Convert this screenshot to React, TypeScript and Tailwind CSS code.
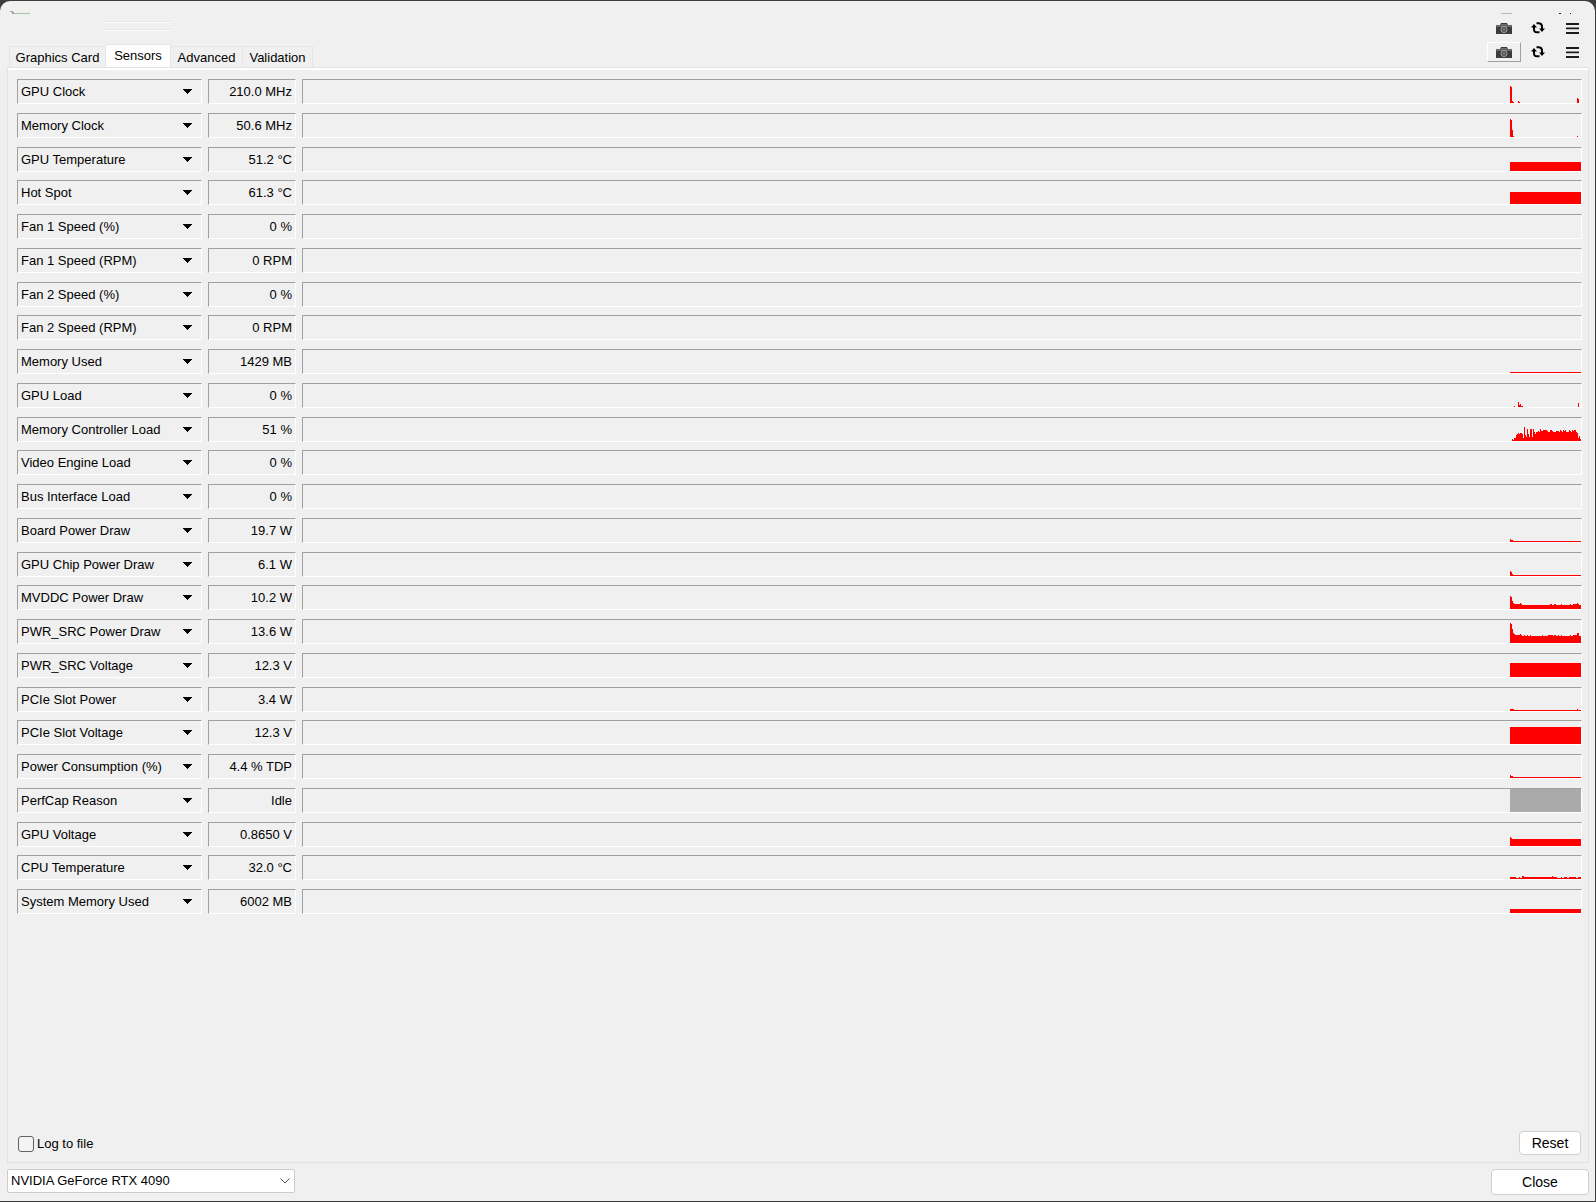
import React from 'react';

// Runs of [height, width] in pixels, drawn left to right along the bottom of the graph
type Run = [number, number];

interface Sensor {
  name: string;
  value: string;
  runs?: Run[];
  idle?: boolean;
}

const sensors: Sensor[] = [
  { name: 'GPU Clock', value: '210.0 MHz', runs: [[17, 1], [16, 1], [2, 1], [1, 1], [0, 4], [2, 1], [1, 1], [0, 57], [5, 1], [4, 1], [0, 2]] },
  { name: 'Memory Clock', value: '50.6 MHz', runs: [[18, 1], [17, 1], [7, 1], [1, 1], [0, 63], [1, 1], [0, 3]] },
  { name: 'GPU Temperature', value: '51.2 °C', runs: [[9, 71]] },
  { name: 'Hot Spot', value: '61.3 °C', runs: [[12, 71]] },
  { name: 'Fan 1 Speed (%)', value: '0 %' },
  { name: 'Fan 1 Speed (RPM)', value: '0 RPM' },
  { name: 'Fan 2 Speed (%)', value: '0 %' },
  { name: 'Fan 2 Speed (RPM)', value: '0 RPM' },
  { name: 'Memory Used', value: '1429 MB', runs: [[1, 71]] },
  { name: 'GPU Load', value: '0 %', runs: [[0, 4], [1, 1], [0, 3], [5, 1], [2, 1], [3, 1], [1, 2], [0, 55], [4, 1], [0, 2]] },
  {
    name: 'Memory Controller Load',
    value: '51 %',
    runs: [
      [0, 2], [2, 1], [1, 1], [3, 2], [6, 1], [7, 1], [8, 1], [7, 1], [8, 2], [7, 1], [3, 1], [14, 1], [6, 1], [4, 1], [12, 1], [7, 1], [4, 1],
      [12, 2], [4, 1], [12, 1], [9, 1], [7, 1], [9, 2], [10, 1], [9, 1], [12, 1], [10, 2], [11, 4], [10, 1], [9, 2], [11, 2], [10, 1], [9, 3], [10, 3], [9, 1],
      [11, 1], [10, 1], [9, 1], [11, 1], [10, 1], [11, 1], [9, 3], [11, 1], [10, 1], [9, 1], [11, 1], [10, 1], [11, 2], [9, 1], [8, 1], [3, 1], [5, 1], [2, 1], [4, 1],
    ],
  },
  { name: 'Video Engine Load', value: '0 %' },
  { name: 'Bus Interface Load', value: '0 %' },
  { name: 'Board Power Draw', value: '19.7 W', runs: [[3, 1], [2, 2], [1, 68]] },
  { name: 'GPU Chip Power Draw', value: '6.1 W', runs: [[5, 1], [4, 1], [2, 1], [1, 68]] },
  {
    name: 'MVDDC Power Draw',
    value: '10.2 W',
    runs: [[13, 1], [12, 1], [8, 1], [6, 1], [5, 6], [6, 1], [5, 1], [4, 28], [5, 2], [4, 2], [5, 2], [4, 5], [5, 1], [4, 8], [5, 1], [4, 2], [5, 4], [6, 1], [5, 1], [4, 2]],
  },
  {
    name: 'PWR_SRC Power Draw',
    value: '13.6 W',
    runs: [[20, 1], [19, 1], [14, 1], [10, 1], [9, 1], [8, 5], [9, 1], [8, 1], [7, 2], [8, 1], [7, 2], [8, 1], [7, 2], [8, 1], [7, 11], [8, 1], [7, 5], [8, 5], [7, 1], [8, 2], [7, 2], [8, 1], [7, 2], [8, 1], [7, 8], [8, 1], [7, 2], [8, 4], [10, 2], [7, 2]],
  },
  { name: 'PWR_SRC Voltage', value: '12.3 V', runs: [[14, 71]] },
  { name: 'PCIe Slot Power', value: '3.4 W', runs: [[2, 4], [1, 63], [2, 1], [1, 3]] },
  { name: 'PCIe Slot Voltage', value: '12.3 V', runs: [[17, 71]] },
  { name: 'Power Consumption (%)', value: '4.4 % TDP', runs: [[3, 1], [2, 2], [1, 68]] },
  { name: 'PerfCap Reason', value: 'Idle', runs: [[23, 71]], idle: true },
  { name: 'GPU Voltage', value: '0.8650 V', runs: [[9, 1], [8, 1], [7, 69]] },
  {
    name: 'CPU Temperature',
    value: '32.0 °C',
    runs: [[2, 6], [1, 3], [2, 1], [1, 2], [3, 2], [2, 28], [3, 1], [2, 4], [1, 4], [2, 1], [1, 2], [2, 3], [1, 2], [2, 7], [1, 2], [2, 3]],
  },
  { name: 'System Memory Used', value: '6002 MB', runs: [[4, 71]] },
];

const sunken = 'border border-t-[#a0a0a0] border-l-[#a0a0a0] border-b-white border-r-white';

const Graph: React.FC<{ sensor: Sensor }> = ({ sensor }) => {
  let x = 0;
  return (
    <div className={`${sunken} flex h-[25px] min-w-0 flex-1 items-end justify-end`}>
      {sensor.runs && (
        <svg width="71" height="23" viewBox="0 0 71 23" shapeRendering="crispEdges" aria-hidden="true">
          {sensor.runs.map(([height, width], i) => {
            const left = x;
            x += width;
            return <rect key={i} x={left} y={23 - height} width={width} height={height} fill={sensor.idle ? '#aaaaaa' : '#ff0000'} />;
          })}
        </svg>
      )}
    </div>
  );
};

const SensorRow: React.FC<{ sensor: Sensor }> = ({ sensor }) => (
  <li className="mb-[9px] flex gap-[6px] nth-[4n+3]:mb-2">
    <button type="button" className={`${sunken} flex h-[25px] w-[185px] shrink-0 items-center justify-between pr-[9px] pl-[3px] text-left`}>
      <span>{sensor.name}</span>
      <svg width="9" height="5" viewBox="0 0 9 5" shapeRendering="crispEdges" aria-hidden="true">
        <path d="M0 0h9v1H0zM1 1h7v1H1zM2 2h5v1H2zM3 3h3v1H3zM4 4h1v1H4z" />
      </svg>
    </button>
    <div className={`${sunken} flex h-[25px] w-[88px] shrink-0 items-center justify-end pr-[3px]`}>{sensor.value}</div>
    <Graph sensor={sensor} />
  </li>
);

const CameraIcon = () => (
  <svg width="16" height="11" viewBox="0 0 16 11" aria-hidden="true">
    <path d="M0 2h4l1-2h6l1 2h4v9H0z" fill="#3c3c3c" />
    <path d="M0 2h4l1-1h6l1 1h4v2H0z" fill="#686868" />
    <circle cx="8" cy="6.500" r="3" fill="#444" stroke="#a8a8a8" />
    <circle cx="8" cy="6.500" r="1.200" fill="#888" />
  </svg>
);

const RefreshIcon = () => (
  <svg width="14" height="12" viewBox="0 0 14 12" aria-hidden="true">
    <path d="M5.500 1.300H8Q11 1.500 11 5V7M8.500 10.300H6Q3 10.500 3 7V5" fill="none" stroke="#000" strokeWidth="2" />
    <path d="M8 6.500H14L11 10zM0 5.500H6L3 2z" />
  </svg>
);

const MenuIcon = () => (
  <svg width="13" height="11" viewBox="0 0 13 11" aria-hidden="true">
    <path d="M0 0h13v2H0zM0 4.500h13v1.800H0zM0 9h13v2H0z" fill="#1c1c1c" />
  </svg>
);

const Toolbar: React.FC<{ raised?: boolean }> = ({ raised }) => (
  <div className="flex h-6 items-center">
    <button
      type="button"
      aria-label="Screenshot"
      className={`flex h-5 w-[34px] items-center justify-center border ${raised ? 'border-t-white border-l-white border-b-[#a0a0a0] border-r-[#a0a0a0]' : 'border-transparent'}`}
    >
      <CameraIcon />
    </button>
    <button type="button" aria-label="Refresh" className="flex h-5 w-[34px] items-center justify-center">
      <RefreshIcon />
    </button>
    <button type="button" aria-label="Menu" className="flex h-5 w-[34px] items-center justify-center">
      <MenuIcon />
    </button>
  </div>
);

const tabs = [
  { name: 'Graphics Card', width: 'w-[97px]' },
  { name: 'Sensors', width: 'w-[65px]' },
  { name: 'Advanced', width: 'w-[72px]' },
  { name: 'Validation', width: 'w-[70px]' },
];

export default function App() {
  return (
    <div className="flex min-h-screen flex-col bg-[#3c3c3c] pt-px pr-px pb-px">
      <div className="flex flex-1 flex-col rounded-t-[10px] bg-[#f0f0f0] font-['Liberation_Sans',Arial,sans-serif] text-[13px] leading-4 text-black">
        <header className="flex h-[66px] justify-between pr-[6px] pl-[9px]">
          <div className="flex flex-col">
            <svg width="22" height="4" viewBox="0 0 22 4" className="mt-[10px] ml-[1px]" shapeRendering="crispEdges" aria-hidden="true">
              <path d="M0 0h3v1H0zM2 1h2v2H2z" fill="#a0a0a0" />
              <path d="M4 2h16v1H4z" fill="#a9c3a9" />
            </svg>
            <div className="mt-[6px] ml-[97px] flex h-[10px] w-[65px] flex-col justify-between">
              <div className="h-[2px] border-t border-[#e5e5e5] bg-white" />
              <div className="h-[2px] border-t border-[#e5e5e5] bg-white" />
            </div>
            <nav className="mt-auto flex items-end" role="tablist">
              {tabs.map((tab) => (
                <button
                  key={tab.name}
                  type="button"
                  role="tab"
                  aria-selected={tab.name === 'Sensors'}
                  className={`${tab.width} whitespace-nowrap border border-b-0 border-[#e5e5e5] text-center ${tab.name === 'Sensors' ? 'h-[23px] bg-white' : 'h-[21px] pt-px'} ${tab.name === 'Graphics Card' ? '' : 'border-l-0'}`}
                >
                  {tab.name}
                </button>
              ))}
            </nav>
          </div>
          <div className="flex flex-col">
            <svg width="80" height="3" viewBox="0 0 80 3" className="mt-[10px] mb-[2px] ml-[12px]" shapeRendering="crispEdges" aria-hidden="true">
              <path d="M2 2h11v1H2z" fill="#bbbbbb" />
              <path d="M60 2h2v1H60zM71 2h1v1H71z" fill="#222" />
            </svg>
            <Toolbar />
            <Toolbar raised />
          </div>
        </header>

        <main className="mr-[6px] ml-[7px] flex flex-1 flex-col border border-[#e2e2e2]">
          <div className="h-[2px] bg-white" />
          <ul className="pt-[9px] pr-[6px] pl-[9px]">
            {sensors.map((sensor) => (
              <SensorRow key={sensor.name} sensor={sensor} />
            ))}
          </ul>
          <div className="mt-auto flex items-end justify-between pr-[7px] pb-[7px] pl-[10px]">
            <label className="flex items-center gap-[3px] pb-[3px]">
              <input type="checkbox" className="size-4 appearance-none rounded-[3px] border border-[#626262] bg-[#f3f3f3]" />
              Log to file
            </label>
            <button type="button" className="h-6 w-[62px] rounded-[4px] border border-[#d0d0d0] bg-white text-[14px]">
              Reset
            </button>
          </div>
        </main>

        <footer className="flex h-[38px] items-start justify-between pt-[6px] pr-[6px] pl-[7px]">
          <div className="grid items-center">
            <select aria-label="Graphics card" className="col-start-1 row-start-1 h-6 w-[288px] appearance-none rounded-[2px] border border-[#cccccc] bg-white pl-[3px]">
              <option>NVIDIA GeForce RTX 4090</option>
            </select>
            <svg width="10" height="6" viewBox="0 0 10 6" className="pointer-events-none col-start-1 row-start-1 mr-[5px] justify-self-end" fill="none" stroke="#555" aria-hidden="true">
              <path d="M.500.500L5 5l4.500-4.500" />
            </svg>
          </div>
          <button type="button" className="h-[26px] w-[98px] rounded-[4px] border border-[#d0d0d0] bg-white text-[14px]">
            Close
          </button>
        </footer>
      </div>
    </div>
  );
}
